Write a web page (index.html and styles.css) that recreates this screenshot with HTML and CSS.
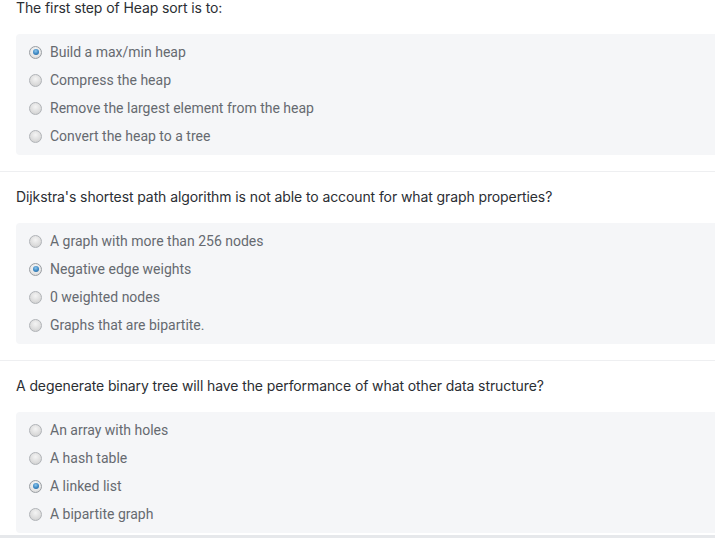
FILE: index.html
```html
<!DOCTYPE html>
<html>
<head>
<meta charset="utf-8">
<link rel="stylesheet" href="styles.css">
</head>
<body>
<div class="quiz">
  <section class="question first">
    <h3 class="q-title">The first step of Heap sort is to:</h3>
    <div class="options">
      <label class="opt"><span class="radio checked"></span><span>Build a max/min heap</span></label>
      <label class="opt"><span class="radio"></span><span>Compress the heap</span></label>
      <label class="opt"><span class="radio"></span><span>Remove the largest element from the heap</span></label>
      <label class="opt"><span class="radio"></span><span>Convert the heap to a tree</span></label>
    </div>
  </section>
  <section class="question">
    <h3 class="q-title">Dijkstra's shortest path algorithm is not able to account for what graph properties?</h3>
    <div class="options">
      <label class="opt"><span class="radio"></span><span>A graph with more than 256 nodes</span></label>
      <label class="opt"><span class="radio checked"></span><span>Negative edge weights</span></label>
      <label class="opt"><span class="radio"></span><span>0 weighted nodes</span></label>
      <label class="opt"><span class="radio"></span><span>Graphs that are bipartite.</span></label>
    </div>
  </section>
  <section class="question">
    <h3 class="q-title">A degenerate binary tree will have the performance of what other data structure?</h3>
    <div class="options">
      <label class="opt"><span class="radio"></span><span>An array with holes</span></label>
      <label class="opt"><span class="radio"></span><span>A hash table</span></label>
      <label class="opt"><span class="radio checked"></span><span>A linked list</span></label>
      <label class="opt"><span class="radio"></span><span>A bipartite graph</span></label>
    </div>
  </section>
</div>
<div class="hscroll"></div>
</body>
</html>
```
FILE: styles.css
```css
html, body {
  margin: 0;
  padding: 0;
  background: #fff;
  overflow: hidden;
}
.quiz {
  display: flex;
  flex-direction: column;
}
.question {
  border-top: 1px solid #eeeff1;
  padding: 17px 0 16px 16px;
}
.question.first {
  border-top: none;
  padding-top: 0;
}
.q-title {
  margin: 0 0 18px 0;
  font-family: Inter, "Liberation Sans", sans-serif;
  font-weight: 400;
  font-size: 14px;
  letter-spacing: -0.1px;
  line-height: 16px;
  color: #2b2e33;
}
.options {
  background: #f5f6f8;
  border-radius: 4px 0 0 4px;
  padding: 4px 0 5px 13px;
  margin-right: -20px;
  display: flex;
  flex-direction: column;
}
.opt {
  display: flex;
  align-items: center;
  gap: 8px;
  height: 28px;
  font-family: Roboto, "Liberation Sans", sans-serif;
  font-size: 14px;
  color: #666a70;
}
.radio {
  width: 11px;
  height: 11px;
  border-radius: 50%;
  border: 1px solid #b0b3b7;
  background: radial-gradient(circle at 50% 35%, #f4f4f4 0%, #dedede 55%, #c9c9c9 100%);
  box-sizing: content-box;
  position: relative;
  flex: none;
}
.radio.checked {
  border-color: #9a9ea3;
  background: radial-gradient(circle at 50% 35%, #fafafa 0%, #e6e6e6 60%, #cfcfcf 100%);
}
.radio.checked::after {
  content: "";
  position: absolute;
  left: 2.5px;
  top: 2.5px;
  width: 6px;
  height: 6px;
  border-radius: 50%;
  background: radial-gradient(circle at 45% 35%, #8ec6ec 0%, #3a86c2 55%, #255f8f 100%);
}
.hscroll {
  position: fixed;
  left: 0;
  right: 0;
  bottom: 0;
  height: 3px;
  background: #e6e8eb;
}
```
